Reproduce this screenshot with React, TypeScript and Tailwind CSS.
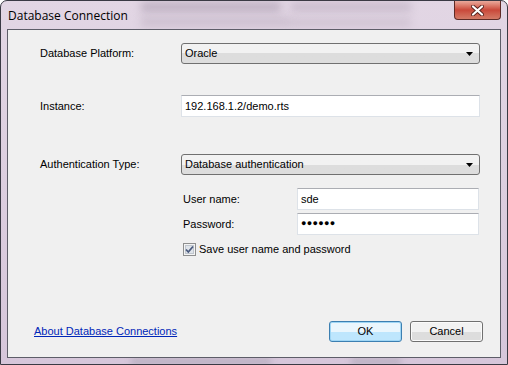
import React from "react";

const font = { fontFamily: '"Liberation Sans", Arial, sans-serif' };

function Arrow() {
  return (
    <svg width="7" height="4" viewBox="0 0 7 4" className="block">
      <path d="M0 0 H7 L3.5 4 Z" fill="#000" />
    </svg>
  );
}

function Combo({ value }: { value: string }) {
  return (
    <div className="w-[299px] h-[21px] flex items-center justify-between rounded-[3px] border border-[#707070] bg-gradient-to-b from-[#f2f2f2] from-50% to-[#dddddd] to-50% pl-[3px] pr-[6px] text-[11px] text-black">
      <span>{value}</span>
      <Arrow />
    </div>
  );
}

function TextBox({ value, w, dots }: { value: string; w: string; dots?: boolean }) {
  return (
    <div
      className={`${w} h-[22px] flex items-center bg-white border border-[#dde2e8] border-t-[#abadb3] pl-[3px] text-[11px] text-black`}
    >
      {dots ? (
        <span className="text-[9px] tracking-[0.3px] font-bold">●●●●●●</span>
      ) : (
        <span>{value}</span>
      )}
    </div>
  );
}

export default function App() {
  return (
    <div
      className="relative w-[508px] h-[365px] overflow-hidden rounded-t-[7px] border border-[#3a3a44] bg-gradient-to-b from-[#e2d6e4] to-[#d6c6da] flex flex-col"
      style={font}
    >
      {/* blurred background glass */}
      <div className="absolute left-[140px] top-[1px] w-[140px] h-[10px] bg-[#9c8ea2] blur-[4px] opacity-50" />
      <div className="absolute left-[290px] top-[2px] w-[120px] h-[8px] bg-[#9c8ea2] blur-[4px] opacity-40" />
      <div className="absolute left-[140px] top-[17px] w-[150px] h-[8px] bg-[#a698aa] blur-[4px] opacity-40" />
      <div className="absolute left-[290px] top-[18px] w-[120px] h-[7px] bg-[#a698aa] blur-[4px] opacity-35" />
      <div className="absolute left-[130px] bottom-[0px] w-[140px] h-[5px] bg-[#8e8e9a] blur-[3px] opacity-50" />
      <div className="absolute left-[350px] bottom-[0px] w-[50px] h-[5px] bg-[#8e8e9a] blur-[3px] opacity-50" />

      {/* title bar */}
      <div className="relative h-[28px] flex items-start justify-between">
        <span className="pl-[7px] pt-[6px] text-[12px] text-black" style={{ fontFamily: '"Open Sans", "Liberation Sans", sans-serif' }}>
          Database Connection
        </span>
        <div className="mr-[6px] w-[47px] h-[19px] rounded-b-[4px] border border-t-0 border-[#5e2b26] bg-gradient-to-b from-[#e9a99c] via-[#c9483a] to-[#d37a67] flex items-center justify-center">
          <svg width="13" height="11" viewBox="0 0 13 11">
            <path d="M2 1.5 L11 9.5 M11 1.5 L2 9.5" stroke="#5a2420" strokeWidth="4" strokeLinecap="round" />
            <path d="M2 1.5 L11 9.5 M11 1.5 L2 9.5" stroke="#ffffff" strokeWidth="2.2" strokeLinecap="round" />
          </svg>
        </div>
      </div>

      {/* client area */}
      <div className="relative mx-[6px] h-[329px] border border-[#5d5d68] bg-[#f0f0f0] flex flex-col text-[11px] text-black">
        <div className="flex items-center pl-[32px] mt-[13px]">
          <span className="w-[141px]">Database Platform:</span>
          <Combo value="Oracle" />
        </div>
        <div className="flex items-center pl-[32px] mt-[31px]">
          <span className="w-[141px]">Instance:</span>
          <TextBox value="192.168.1.2/demo.rts" w="w-[299px]" />
        </div>
        <div className="flex items-center pl-[32px] mt-[37px]">
          <span className="w-[141px]">Authentication Type:</span>
          <Combo value="Database authentication" />
        </div>
        <div className="flex items-center pl-[175px] mt-[13px]">
          <span className="w-[114px]">User name:</span>
          <TextBox value="sde" w="w-[182px]" />
        </div>
        <div className="flex items-center pl-[175px] mt-[3px]">
          <span className="w-[114px]">Password:</span>
          <TextBox value="" w="w-[182px]" dots />
        </div>
        <div className="flex items-center pl-[175px] mt-[6px] gap-[3px]">
          <svg width="13" height="13" viewBox="0 0 13 13" className="block">
            <rect x="0.5" y="0.5" width="12" height="12" fill="#f4f4f4" stroke="#8e8f8f" />
            <rect x="2.5" y="2.5" width="8" height="8" fill="#dfe4ea" stroke="#c0c6ce" />
            <path d="M3 6.5 L5.3 9 L10 3.5" stroke="#4a5a7e" strokeWidth="1.8" fill="none" />
          </svg>
          <span>Save user name and password</span>
        </div>

        <div className="flex-1" />

        <div className="flex items-center justify-between pl-[26px] pr-[17px] mb-[15px]">
          <span className="text-[#0026b8] underline underline-offset-1">About Database Connections</span>
          <div className="flex gap-[8px]">
            <div className="w-[73px] h-[21px] rounded-[3px] border border-[#3c7fb1] bg-gradient-to-b from-[#eaf6fd] from-50% to-[#bee6fd] to-50% flex items-center justify-center shadow-[inset_0_0_0_1px_#9fd6f5]">
              OK
            </div>
            <div className="w-[73px] h-[21px] rounded-[3px] border border-[#707070] bg-gradient-to-b from-[#f2f2f2] from-50% to-[#dddddd] to-50% flex items-center justify-center shadow-[inset_0_0_0_1px_#fbfbfb]">
              Cancel
            </div>
          </div>
        </div>
      </div>
    </div>
  );
}
